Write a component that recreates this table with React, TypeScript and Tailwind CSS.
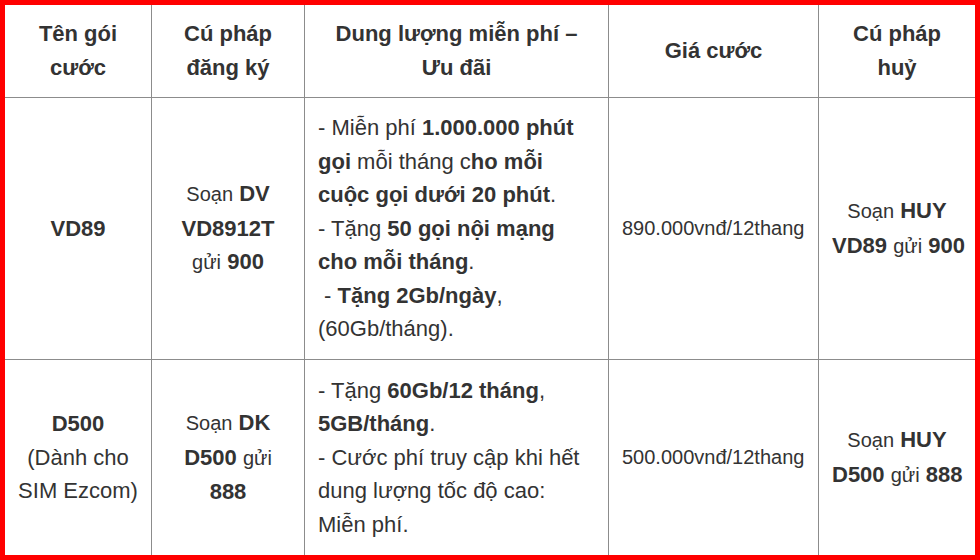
const cell = "border-r border-b border-[#8c8c8c] px-[13px] align-middle";

function Sm({ children }: { children: React.ReactNode }) {
  return <span className="text-[20px]">{children}</span>;
}

export default function App() {
  return (
    <div
      className="h-[560px] w-[980px] overflow-hidden border-[5px] border-[#ff0000] bg-white text-[#333333]"
      style={{ fontFamily: '"Liberation Sans", Arial, sans-serif' }}
    >
      <table className="h-full w-full table-fixed border-separate border-spacing-0 text-[22px] leading-[33.6px]">
        <colgroup>
          <col className="w-[147px]" />
          <col className="w-[153px]" />
          <col className="w-[304px]" />
          <col className="w-[210px]" />
          <col />
        </colgroup>
        <thead>
          <tr className="h-[93px] font-bold">
            <th className={`${cell} text-center`}>
              Tên gói
              <br />
              cước
            </th>
            <th className={`${cell} text-center`}>
              Cú pháp
              <br />
              đăng ký
            </th>
            <th className={`${cell} text-center`}>
              Dung lượng miễn phí –
              <br />
              Ưu đãi
            </th>
            <th className={`${cell} text-center`}>Giá cước</th>
            <th className="border-b border-[#8c8c8c] px-[13px] text-center align-middle">
              Cú pháp
              <br />
              huỷ
            </th>
          </tr>
        </thead>
        <tbody>
          <tr className="h-[262px]">
            <td className={`${cell} text-center font-bold`}>VD89</td>
            <td className={`${cell} whitespace-nowrap text-center`}>
              <Sm>Soạn</Sm> <b>DV</b>
              <br />
              <b>VD8912T</b>
              <br />
              <Sm>gửi</Sm> <b>900</b>
            </td>
            <td className={`${cell} whitespace-nowrap`}>
              - Miễn phí <b>1.000.000 phút</b>
              <br />
              <b>gọi</b> mỗi tháng c<b>ho mỗi</b>
              <br />
              <b>cuộc gọi dưới 20 phút</b>.
              <br />
              - Tặng <b>50 gọi nội mạng</b>
              <br />
              <b>cho mỗi tháng</b>.
              <br />
              &nbsp;- <b>Tặng 2Gb/ngày</b>,
              <br />
              (60Gb/tháng).
            </td>
            <td className={`${cell} text-[20px]`}>890.000vnđ/12thang</td>
            <td className="whitespace-nowrap border-b border-[#8c8c8c] px-[13px] text-center align-middle">
              <Sm>Soạn</Sm> <b>HUY</b>
              <br />
              <b>VD89</b> <Sm>gửi</Sm> <b>900</b>
            </td>
          </tr>
          <tr>
            <td className="whitespace-nowrap border-r border-[#8c8c8c] px-[13px] text-center align-middle">
              <b>D500</b>
              <br />
              (Dành cho
              <br />
              SIM Ezcom)
            </td>
            <td className="whitespace-nowrap border-r border-[#8c8c8c] px-[13px] text-center align-middle">
              <Sm>Soạn</Sm> <b>DK</b>
              <br />
              <b>D500</b> <Sm>gửi</Sm>
              <br />
              <b>888</b>
            </td>
            <td className="whitespace-nowrap border-r border-[#8c8c8c] px-[13px] align-middle">
              - Tặng <b>60Gb/12 tháng</b>,
              <br />
              <b>5GB/tháng</b>.
              <br />
              - Cước phí truy cập khi hết
              <br />
              dung lượng tốc độ cao:
              <br />
              Miễn phí.
            </td>
            <td className="border-r border-[#8c8c8c] px-[13px] align-middle text-[20px]">
              500.000vnđ/12thang
            </td>
            <td className="whitespace-nowrap px-[13px] text-center align-middle">
              <Sm>Soạn</Sm> <b>HUY</b>
              <br />
              <b>D500</b> <Sm>gửi</Sm> <b>888</b>
            </td>
          </tr>
        </tbody>
      </table>
    </div>
  );
}
